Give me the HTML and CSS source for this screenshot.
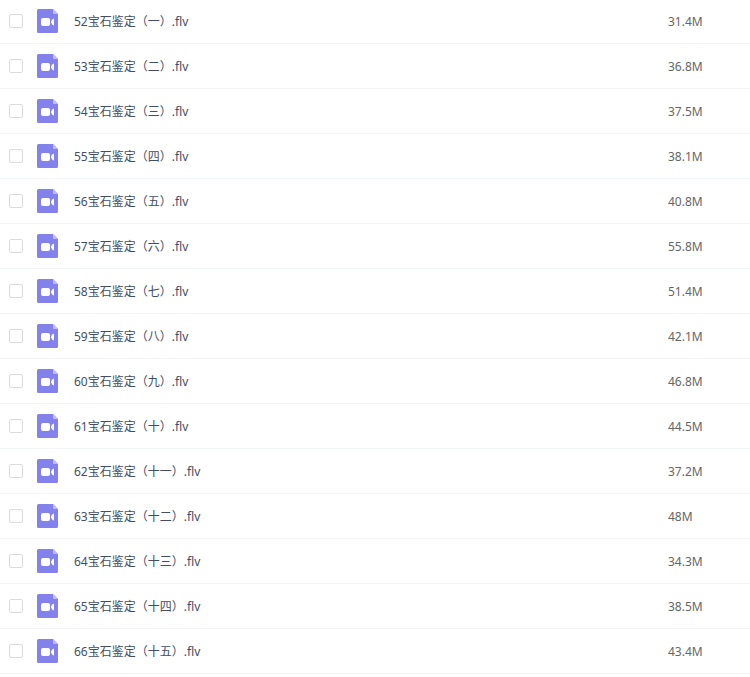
FILE: index.html
```html
<!DOCTYPE html>
<html lang="zh-CN">
<head>
<meta charset="utf-8">
<title>文件列表</title>
<link rel="stylesheet" href="styles.css">
</head>
<body>
<svg class="defs" aria-hidden="true">
  <symbol id="video-file" viewBox="0 0 21 24">
    <path fill="#8382ed" d="M1.500 0H16l5 5v17.500a1.500 1.500 0 0 1-1.500 1.500h-18A1.500 1.500 0 0 1 0 22.500v-21A1.500 1.500 0 0 1 1.500 0z"/>
    <path fill="#bdbcf7" d="M16 0l5 5h-4a1 1 0 0 1-1-1z"/>
    <rect fill="#fff" x="4" y="9" width="9" height="8" rx="2"/>
    <path fill="#fff" d="M14 12.500q1-2.500 3-3v7q-2-.5-3-3z"/>
  </symbol>
</svg>
<table class="files">
  <tbody id="rows"></tbody>
</table>
<script src="files.js"></script>
</body>
</html>
```
FILE: styles.css
```css
body {
  margin: 0;
  background: #fff;
  color: #424e67;
  font: 12px/18px "Noto Sans", "Noto Sans CJK SC", sans-serif;
}
.defs {
  position: absolute;
  width: 0;
  height: 0;
}
.files {
  width: 100%;
  margin-top: -1px;
  border-collapse: separate;
  border-spacing: 0;
  table-layout: fixed;
}
td {
  box-sizing: border-box;
  height: 45px;
  padding: 0;
  border-bottom: 1px solid #f3f4f7;
  vertical-align: middle;
}
.pick {
  width: 37px;
  padding-left: 9px;
}
.pick input {
  appearance: none;
  display: block;
  box-sizing: border-box;
  width: 14px;
  height: 14px;
  margin: 0;
  border: 1px solid #dcdcdc;
  border-radius: 2px;
  background: #fff;
}
.pick input:checked {
  background: #8382ed;
}
.kind {
  width: 37px;
}
.kind svg {
  display: block;
  width: 21px;
  height: 24px;
}
.name,
.size {
  padding-top: 2px;
}
.size {
  width: 82px;
  color: #666;
}
```
FILE: files.js
```js
const files = [
  ["52宝石鉴定（一）.flv", "31.4M"],
  ["53宝石鉴定（二）.flv", "36.8M"],
  ["54宝石鉴定（三）.flv", "37.5M"],
  ["55宝石鉴定（四）.flv", "38.1M"],
  ["56宝石鉴定（五）.flv", "40.8M"],
  ["57宝石鉴定（六）.flv", "55.8M"],
  ["58宝石鉴定（七）.flv", "51.4M"],
  ["59宝石鉴定（八）.flv", "42.1M"],
  ["60宝石鉴定（九）.flv", "46.8M"],
  ["61宝石鉴定（十）.flv", "44.5M"],
  ["62宝石鉴定（十一）.flv", "37.2M"],
  ["63宝石鉴定（十二）.flv", "48M"],
  ["64宝石鉴定（十三）.flv", "34.3M"],
  ["65宝石鉴定（十四）.flv", "38.5M"],
  ["66宝石鉴定（十五）.flv", "43.4M"]
];
document.getElementById("rows").innerHTML = files.map(([name, size], i) => `
  <tr>
    <td class="pick"><input type="checkbox" id="file-${i}"></td>
    <td class="kind"><svg aria-hidden="true"><use href="#video-file"/></svg></td>
    <td class="name"><label for="file-${i}">${name}</label></td>
    <td class="size">${size}</td>
  </tr>`).join("");
```
